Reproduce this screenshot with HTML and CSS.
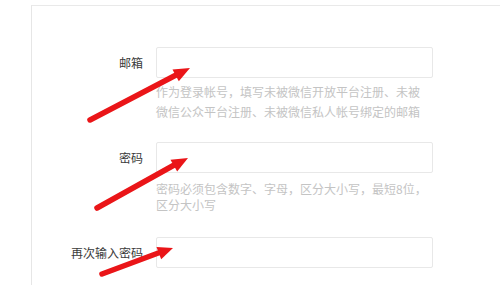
FILE: index.html
```html
<!DOCTYPE html>
<html lang="zh-CN">
<head>
<meta charset="utf-8">
<link rel="stylesheet" href="styles.css">
</head>
<body>
<div class="frame">
  <form class="form">
    <div class="row row-email">
      <label class="label">邮箱</label>
      <div class="field">
        <div class="input"></div>
        <p class="hint hint-email">作为登录帐号，填写未被微信开放平台注册、未被<br>微信公众平台注册、未被微信私人帐号绑定的邮箱</p>
      </div>
    </div>
    <div class="row row-pass">
      <label class="label">密码</label>
      <div class="field">
        <div class="input"></div>
        <p class="hint hint-pass">密码必须包含数字、字母，区分大小写，最短8位，<br>区分大小写</p>
      </div>
    </div>
    <div class="row">
      <label class="label">再次输入密码</label>
      <div class="field">
        <div class="input"></div>
      </div>
    </div>
  </form>
</div>
<svg class="arrows" width="500" height="285" viewBox="0 0 500 285">
  <g stroke="#ea1518" stroke-linecap="round" fill="none">
    <line x1="90" y1="120" x2="178" y2="74" stroke-width="5.5"/>
    <line x1="97" y1="208" x2="176" y2="164" stroke-width="5.5"/>
    <line x1="102" y1="274" x2="161" y2="252" stroke-width="5.5"/>
  </g>
  <g fill="#ea1518">
    <polygon points="190,68 172.5,69.5 178.8,81.2"/>
    <polygon points="188,158 170.5,159.8 177.2,171.5"/>
    <polygon points="173,248 156.5,247 161.2,259.3"/>
  </g>
</svg>
</body>
</html>
```
FILE: styles.css
```css
html, body {
  margin: 0;
  padding: 0;
  background: #ffffff;
}
body {
  width: 500px;
  height: 285px;
  overflow: hidden;
  position: relative;
  font-family: "Noto Sans CJK SC", "Noto Sans", sans-serif;
  font-size: 12px;
  color: #333333;
}
.frame {
  margin-top: 5px;
  margin-left: 31px;
  height: 280px;
  border-top: 1px solid #e9e9e9;
  border-left: 1px solid #e6e6e6;
}
.form {
  margin: 0;
  padding-top: 41px;
  display: flex;
  flex-direction: column;
}
.row {
  display: grid;
  grid-template-columns: 111px 277px;
  column-gap: 13px;
}
.row-email {
  margin-bottom: 20px;
}
.row-pass {
  margin-bottom: 24px;
}
.label {
  text-align: right;
  line-height: 31px;
  height: 31px;
  white-space: nowrap;
  color: #3a3a3a;
}
.input {
  box-sizing: border-box;
  height: 31px;
  border: 1px solid #e8e8e8;
  border-radius: 2px;
  background: #ffffff;
}
.hint {
  margin: 0;
  color: #c4c4c4;
  white-space: nowrap;
}
.hint-email {
  margin-top: 4px;
  line-height: 20px;
}
.hint-pass {
  margin-top: 8px;
  line-height: 16px;
}
.arrows {
  position: absolute;
  left: 0;
  top: 0;
}
```
